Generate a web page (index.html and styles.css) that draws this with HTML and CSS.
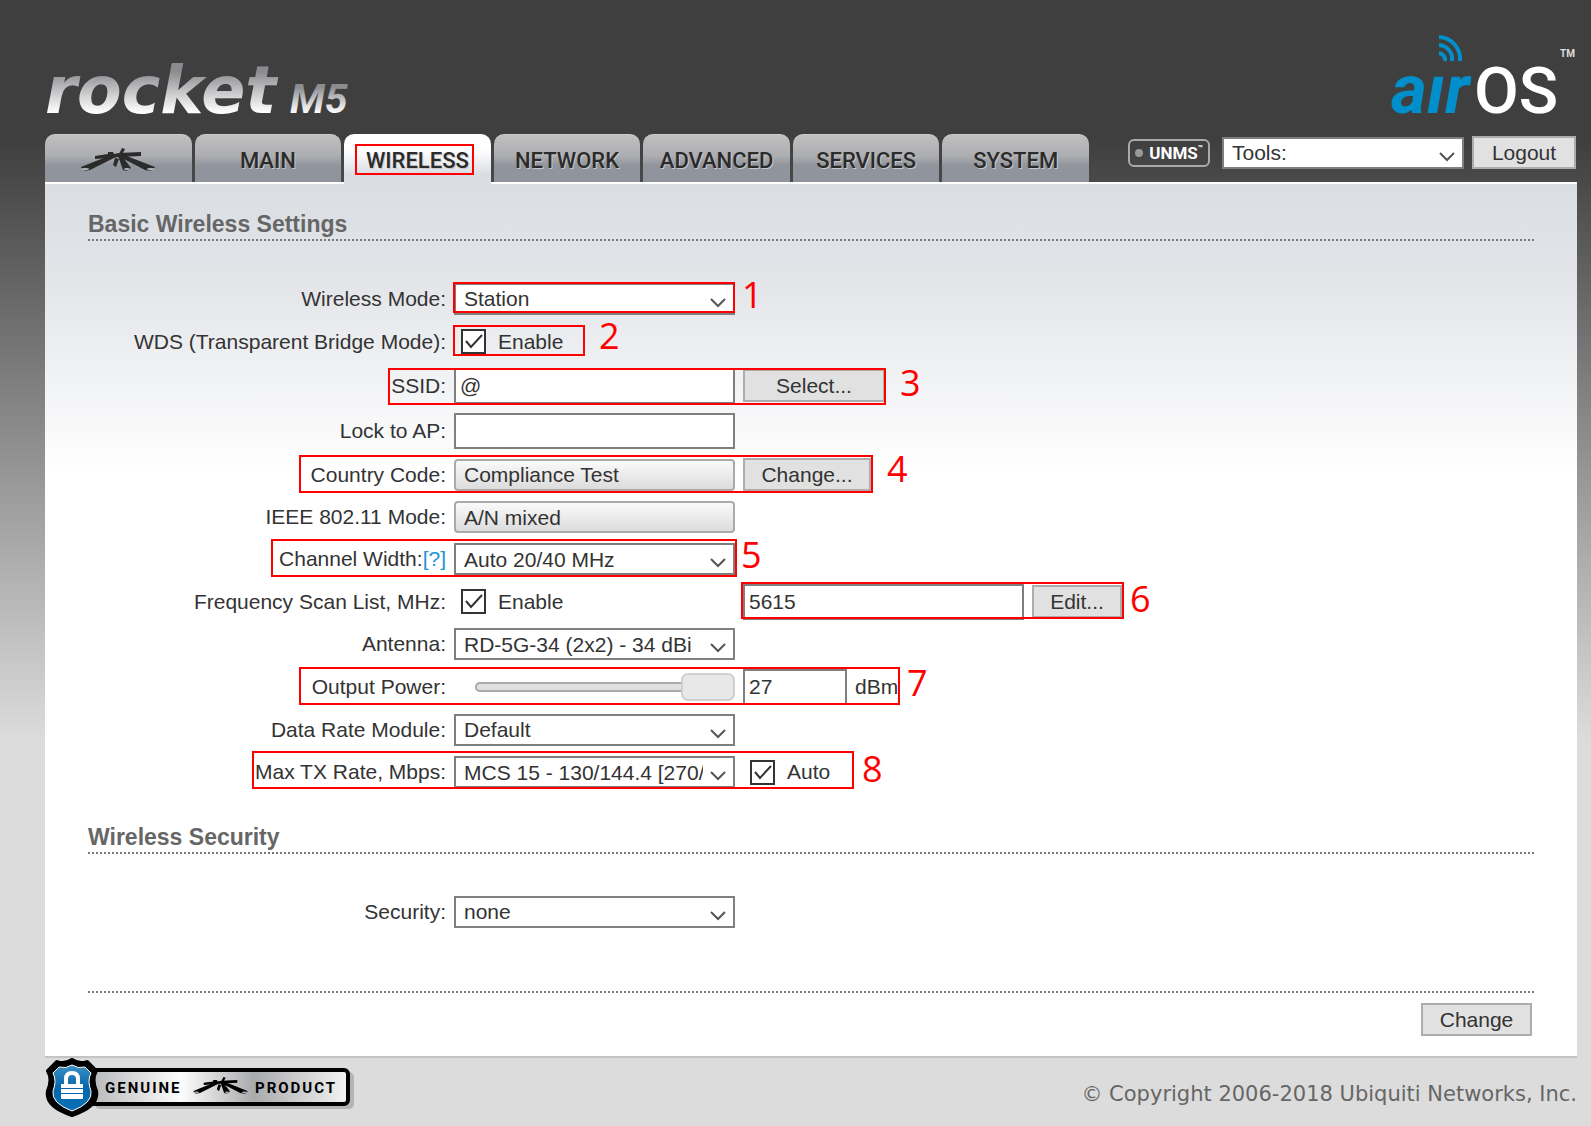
FILE: index.html
```html
<!DOCTYPE html>
<html lang="en">
<head>
<meta charset="utf-8">
<title>Rocket M5 - Wireless</title>
<link rel="stylesheet" href="styles.css">
</head>
<body>
<svg class="defs" width="0" height="0" aria-hidden="true">
  <defs>
    <linearGradient id="chrome" x1="0" y1="0" x2="0" y2="1"><stop offset=".25" stop-color="#8b8c90"/><stop offset=".6" stop-color="#d8d8da"/><stop offset=".8" stop-color="#fff"/></linearGradient>
    <linearGradient id="steel" x1="0" y1="0" x2="1" y2="0"><stop offset="0" stop-color="#b4b5b7"/><stop offset=".36" stop-color="#fdfdfd"/><stop offset=".64" stop-color="#a9aaac"/><stop offset="1" stop-color="#f4f4f4"/></linearGradient>
    <linearGradient id="shield" x1="0" y1="0" x2="0" y2="1"><stop offset="0" stop-color="#3d8fc4"/><stop offset=".5" stop-color="#0568ab"/><stop offset="1" stop-color="#0a6fb5"/></linearGradient>
    <symbol id="rifles" viewBox="0 0 78 26">
      <path d="M2 19 32 7h9L11 22q-8 2-9-3Z"/>
      <path d="M16 8 29 6l0-2 5 0 1 2 5-1 22-1v4l-21 1-25 2Z"/>
      <path d="M76 19 45 7l-6 1 27 14q9 2 10-3Z"/>
      <path d="m43 0 3 1-3 6-3-1Z"/>
      <path d="m39 8 4 0 9 12q-3 4-8 2Z"/>
      <path d="m36 10 4 1-3 8-3-2Z"/>
      <g fill="#b4b5b8"><ellipse cx="6" cy="21" rx="4" ry="1"/><ellipse cx="48" cy="21" rx="3" ry="1"/><ellipse cx="72" cy="21" rx="4" ry="1"/></g>
    </symbol>
    <symbol id="chevron" viewBox="0 0 16 10"><path d="m1 1 7 7 7-7" fill="none" stroke="#555" stroke-width="2"/></symbol>
    <symbol id="tick" viewBox="0 0 25 25"><path d="m5 12 5 6L21 6" fill="none" stroke="#333" stroke-width="2"/></symbol>
  </defs>
</svg>

<header class="header">
  <div class="brand">
    <svg width="320" height="70" viewBox="0 0 320 70" role="img" aria-label="rocket M5">
      <text class="logo-rocket" x="0" y="53" fill="url(#chrome)">rocket</text>
      <text class="logo-m5" x="245" y="53" fill="url(#chrome)">M5</text>
    </svg>
    <svg width="190" height="100" viewBox="0 0 190 100" role="img" aria-label="airOS">
      <g fill="none" stroke="#0090cc" stroke-width="4"><path d="M52 3a22 22 0 0 1 21 24"/><path d="M52 11a14 14 0 0 1 13 16"/><path d="M52 19a7 7 0 0 1 6 8"/></g>
      <text class="logo-air" x="4" y="79">aır</text>
      <text class="logo-os" x="87" y="79">OS</text>
      <text class="logo-tm" x="173" y="23">TM</text>
    </svg>
  </div>
  <div class="bar">
    <nav class="tabs">
      <a class="tab" href="#ubnt" aria-label="Ubiquiti"><svg width="78" height="26"><use href="#rifles"/></svg></a>
      <a class="tab" href="#main">MAIN</a>
      <a class="tab tab-on" href="#wireless">WIRELESS</a>
      <a class="tab" href="#network">NETWORK</a>
      <a class="tab" href="#advanced">ADVANCED</a>
      <a class="tab" href="#services">SERVICES</a>
      <a class="tab" href="#system">SYSTEM</a>
    </nav>
    <div class="tools">
      <a class="unms" href="#unms"><i></i><span>UNMS</span><sup>™</sup></a>
      <span class="select tools-select"><select aria-label="Tools"><option>Tools:</option></select><svg><use href="#chevron"/></svg></span>
      <button class="btn btn-logout" type="button">Logout</button>
    </div>
  </div>
</header>

<main class="panel">
  <form>
    <h2>Basic Wireless Settings</h2>
    <div class="rows">
      <div class="row mid"><label for="mode">Wireless Mode:</label><span class="select"><select id="mode"><option>Station</option></select><svg><use href="#chevron"/></svg></span></div>
      <div class="row mid"><span class="label">WDS (Transparent Bridge Mode):</span><label class="check"><span class="box"><input type="checkbox" checked><svg><use href="#tick"/></svg></span>Enable</label></div>
      <div class="row tall"><label for="ssid">SSID:</label><input id="ssid" class="text" type="text" value="@"><button class="btn btn-select" type="button">Select...</button></div>
      <div class="row tall"><label for="lock">Lock to AP:</label><input id="lock" class="text" type="text"></div>
      <div class="row mid"><label for="country">Country Code:</label><span class="select"><select id="country" disabled><option>Compliance Test</option></select></span><button class="btn btn-change" type="button">Change...</button></div>
      <div class="row"><label for="ieee">IEEE 802.11 Mode:</label><span class="select"><select id="ieee" disabled><option>A/N mixed</option></select></span></div>
      <div class="row"><span class="label"><label for="width">Channel Width:</label><a href="#help">[?]</a></span><span class="select"><select id="width"><option>Auto 20/40 MHz</option></select><svg><use href="#chevron"/></svg></span></div>
      <div class="row mid"><span class="label">Frequency Scan List, MHz:</span><label class="check check-col"><span class="box"><input type="checkbox" checked><svg><use href="#tick"/></svg></span>Enable</label><input class="text" type="text" value="5615" aria-label="Scan list"><button class="btn btn-edit" type="button">Edit...</button></div>
      <div class="row"><label for="antenna">Antenna:</label><span class="select"><select id="antenna"><option>RD-5G-34 (2x2) - 34 dBi</option></select><svg><use href="#chevron"/></svg></span></div>
      <div class="row mid"><label for="power">Output Power:</label><input id="power" class="slider" type="range" min="0" max="27" value="27"><input class="text short" type="text" value="27" aria-label="Power in dBm"><span>dBm</span></div>
      <div class="row mid"><label for="rate">Data Rate Module:</label><span class="select"><select id="rate"><option>Default</option></select><svg><use href="#chevron"/></svg></span></div>
      <div class="row"><label for="tx">Max TX Rate, Mbps:</label><span class="select"><select id="tx"><option>MCS 15 - 130/144.4 [270/300]</option></select><svg><use href="#chevron"/></svg></span><label class="check"><span class="box"><input type="checkbox" checked><svg><use href="#tick"/></svg></span>Auto</label></div>
    </div>
    <h2>Wireless Security</h2>
    <div class="rows">
      <div class="row mid"><label for="security">Security:</label><span class="select"><select id="security"><option>none</option></select><svg><use href="#chevron"/></svg></span></div>
    </div>
    <div class="actions"><button class="btn btn-apply" type="submit">Change</button></div>
  </form>
</main>

<footer class="footer">
  <svg width="312" height="62" viewBox="0 0 312 62" role="img" aria-label="Genuine product">
    <rect x="50" y="14" width="259" height="37" rx="5" fill="#999" opacity=".6"/>
    <rect x="42" y="12" width="261" height="34" rx="4" fill="url(#steel)" stroke="#000" stroke-width="4"/>
    <path d="M27 2q7 5 15 2l9 9q-5 8 0 20 3 15-24 24Q0 48 3 33 8 21 3 13l9-9q8 3 15-2Z" fill="#000" stroke="#000" stroke-width="4" stroke-linejoin="round"/>
    <path d="M27 7q6 4 13 2l6 6q-4 8 0 18 2 12-19 20Q6 45 8 33q4-10 0-18l6-6q7 2 13-2Z" fill="url(#shield)" stroke="#fff" stroke-width="1"/>
    <path d="M21 26v-5q0-6 6-6t6 6v5" fill="none" stroke="#fff" stroke-width="4"/>
    <path d="M16 26h22v4H16zM16 31h22v4H16zM16 36h22v5H16z" fill="#fff"/>
    <text class="seal" x="60" y="35">GENUINE</text>
    <svg x="147" y="19" width="57" height="19"><use href="#rifles"/></svg>
    <text class="seal" x="210" y="35">PRODUCT</text>
  </svg>
  <p>© Copyright 2006-2018 Ubiquiti Networks, Inc.</p>
</footer>

<svg class="notes" width="1160" height="800" aria-hidden="true">
  <g fill="none" stroke="#f00" stroke-width="2">
    <rect x="356" y="145" width="117" height="29"/>
    <rect x="454" y="283" width="280" height="29"/>
    <rect x="454" y="326" width="130" height="29"/>
    <rect x="389" y="369" width="496" height="35"/>
    <rect x="300" y="456" width="572" height="36"/>
    <rect x="272" y="540" width="464" height="36"/>
    <rect x="742" y="583" width="381" height="35"/>
    <rect x="300" y="668" width="599" height="36"/>
    <rect x="253" y="752" width="600" height="36"/>
  </g>
  <g class="nums">
    <text x="742" y="308">1</text>
    <text x="599" y="349">2</text>
    <text x="900" y="396">3</text>
    <text x="887" y="482">4</text>
    <text x="741" y="568">5</text>
    <text x="1130" y="612">6</text>
    <text x="907" y="696">7</text>
    <text x="862" y="782">8</text>
  </g>
</svg>
</body>
</html>
```
FILE: styles.css
```css
* { box-sizing: border-box; }

body {
  margin: 0;
  position: relative;
  min-height: 100vh;
  padding: 0 14px 0 45px;
  background: #dcdcdc linear-gradient(#3f3f3f 0, #3f3f3f 140px, #dcdcdc 740px) no-repeat;
  color: #333;
  font: 21px/24px "Liberation Sans", Arial, sans-serif;
}

.defs { position: absolute; }

/* header */
.header { padding-top: 34px; }

.brand {
  display: flex;
  justify-content: space-between;
  align-items: flex-start;
  height: 100px;
}
.brand svg { overflow: visible; }
.brand svg:first-child { margin-top: 26px; }

.logo-rocket { font: italic bold 65px "DejaVu Sans", sans-serif; }
.logo-m5 { font: italic bold 41px Roboto, "Liberation Sans", sans-serif; }
.logo-air { font: italic bold 69px Roboto, "Liberation Sans", sans-serif; fill: #008fca; }
.logo-os { font: 500 65px Roboto, "Liberation Sans", sans-serif; fill: #fff; }
.logo-tm { font: bold 10px Roboto, "Liberation Sans", sans-serif; fill: #ddd; }

.bar {
  display: flex;
  justify-content: space-between;
  height: 48px;
}

.tabs {
  display: grid;
  grid-template-columns: repeat(7, 1fr);
  gap: 3px;
  width: 1044px;
}

.tab {
  display: flex;
  align-items: center;
  justify-content: center;
  padding-top: 4px;
  border-radius: 10px 10px 0 0;
  border-top: 1px solid #ccc;
  background: linear-gradient(#c0c0c0 0, #acadb0 45%, #90949c 65%, #90949c 100%);
  color: #2b2b2b;
  font: 500 22px Roboto, "Liberation Sans", sans-serif;
  text-shadow: 1px 1px 0 #c8c8c8;
  text-decoration: none;
}
.tab svg { fill: #2b2b2b; }
.tab-on {
  position: relative;
  z-index: 1;
  margin-bottom: -2px;
  padding-bottom: 2px;
  background: linear-gradient(#fff 30%, #dadee3 80%);
  border-color: #fff;
}

.tools {
  display: flex;
  align-items: center;
  gap: 8px;
  height: 37px;
  padding-right: 1px;
}
.unms {
  display: flex;
  align-items: center;
  justify-content: center;
  gap: 6px;
  width: 82px;
  height: 28px;
  margin-right: 4px;
  border: 2px solid #aaa;
  border-radius: 6px;
  color: #fff;
  font: bold 17px Roboto, "Liberation Sans", sans-serif;
  text-decoration: none;
}
.unms i { width: 8px; height: 8px; border-radius: 50%; background: #999; }
.unms sup { margin: -8px 0 0 -6px; font-size: 8px; }

/* controls */
.select { position: relative; display: block; width: 281px; }
.select svg {
  position: absolute;
  right: 9px;
  top: 15px;
  width: 16px;
  height: 10px;
  pointer-events: none;
}
.tools-select { width: 242px; }

select, .text, .btn { font: inherit; color: #333; margin: 0; }

select {
  appearance: none;
  display: block;
  width: 100%;
  height: 32px;
  padding: 1px 30px 0 8px;
  border: 2px solid #7f7f7f;
  border-radius: 0;
  background: #fff;
}
select:disabled {
  border-color: #aaa;
  border-radius: 4px;
  background: linear-gradient(#fafafa, #dcdcdc);
  opacity: 1;
}
.text {
  width: 281px;
  height: 36px;
  padding: 0 4px;
  border: 2px solid #7f7f7f;
  border-radius: 0;
  background: #fff;
}
.short { width: 104px; }

.btn {
  height: 33px;
  padding: 0;
  border: 2px solid #adadad;
  border-radius: 0;
  background: #e1e1e1;
}
.btn-logout { width: 104px; }
.btn-select { width: 142px; }
.btn-change { width: 128px; }
.btn-edit { width: 90px; }
.btn-apply { width: 111px; }

.check { display: flex; align-items: center; gap: 12px; padding-left: 7px; }
.check-col { width: 281px; }
.box { display: grid; }
.box > * { grid-area: 1 / 1; width: 25px; height: 25px; margin: 0; }
.box input { appearance: none; border: 2px solid #333; background: #fff; }
.box svg { pointer-events: none; }

.slider {
  appearance: none;
  width: 260px;
  height: 28px;
  margin: 0 0 0 21px;
  background: none;
}
.slider::-webkit-slider-runnable-track {
  height: 10px;
  border-radius: 5px;
  background: #e0e0e0;
  box-shadow: inset 0 0 0 2px #aaa;
}
.slider::-webkit-slider-thumb {
  appearance: none;
  width: 54px;
  height: 28px;
  margin-top: -9px;
  border: 2px solid #d0d0d0;
  border-radius: 7px;
  background: #e8e8e8;
}

/* panel */
.panel {
  border-top: 2px solid #fff;
  border-bottom: 2px solid #c4c4c4;
  padding: 26px 43px 20px;
  background: #fff linear-gradient(#dadee3 0, #e2e4e8 90px, #fff 290px) no-repeat;
}
h2 {
  margin: 0;
  padding-bottom: 1px;
  border-bottom: 2px dotted #777;
  color: #666;
  font: bold 23px/28px "Liberation Sans", Arial, sans-serif;
}
.rows { padding: 36px 0 30px; }
.row { display: flex; align-items: center; gap: 8px; height: 42px; }
.mid { height: 43px; }
.tall { height: 45px; }
.row > :first-child { width: 358px; text-align: right; }
.row a { color: #1e94d2; text-decoration: none; }

.actions {
  display: flex;
  justify-content: flex-end;
  margin-top: 28px;
  padding: 10px 2px 0 0;
  border-top: 2px dotted #777;
}

/* footer */
.footer { display: flex; justify-content: space-between; }
.footer p { margin: 22px 0 0; color: #666; font: 21px/28px "DejaVu Sans", Verdana, sans-serif; }
.seal { font: bold 15px Roboto, "Liberation Sans", sans-serif; letter-spacing: 2px; }

.notes { position: absolute; z-index: 2; left: 0; top: 0; pointer-events: none; }
.nums { fill: #f00; font: 36px "Open Sans", "Noto Sans", sans-serif; }
```
